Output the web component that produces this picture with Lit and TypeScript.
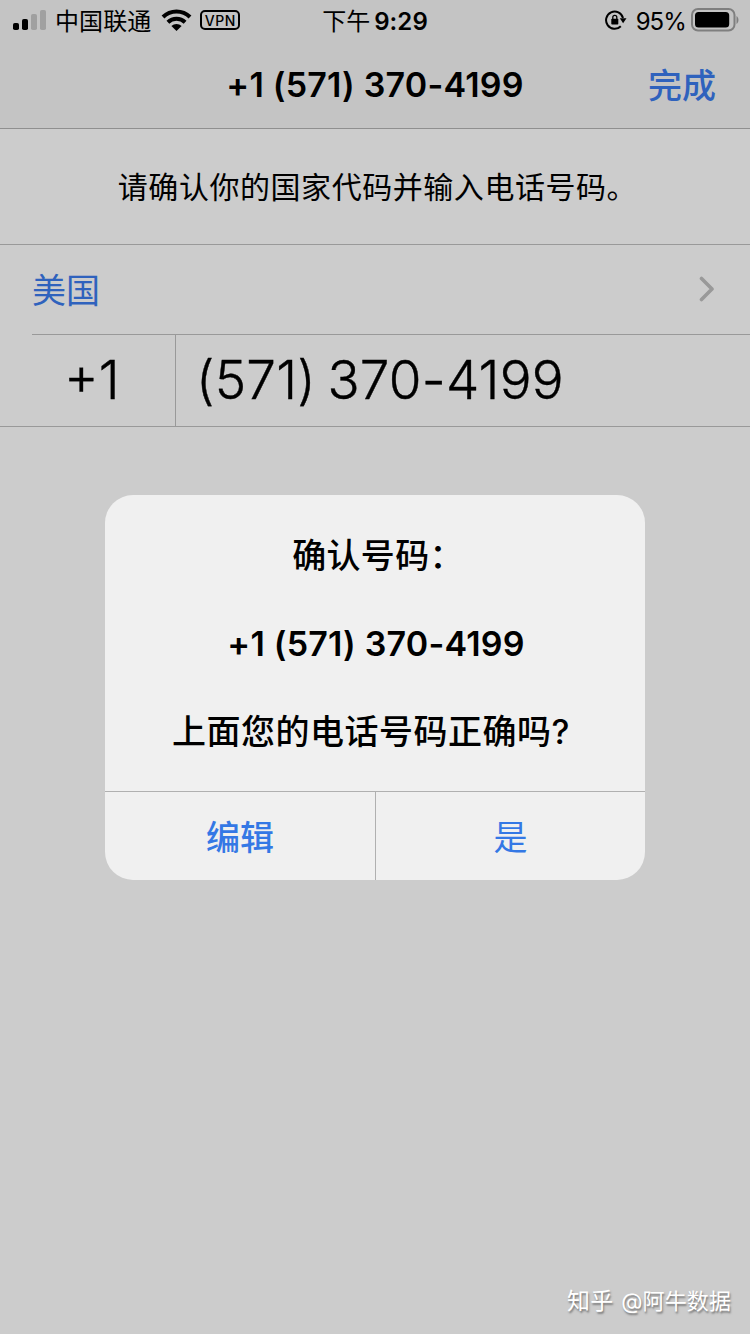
import { LitElement, html, css, svg } from 'lit';
import { customElement, property } from 'lit/decorators.js';

@customElement('status-bar')
export class StatusBar extends LitElement {
  @property() carrier = '';
  @property() time = '';
  @property() period = '';
  @property({ type: Number }) battery = 100;

  static styles = css`
    :host {
      display: grid;
      grid-template-columns: 1fr auto 1fr;
      grid-template-rows: 40px;
      height: 40px;
      font-size: 24px;
      line-height: 38px;
      color: #000;
    }
    svg {
      display: block;
      flex: none;
    }
    .left,
    .middle,
    .right {
      display: flex;
      align-items: center;
      box-sizing: border-box;
      height: 40px;
      white-space: nowrap;
    }
    .left {
      padding-left: 13px;
    }
    .carrier {
      margin-left: 9px;
      padding-top: 3px;
      letter-spacing: 0.1px;
    }
    .wifi {
      margin-left: 10px;
    }
    .vpn {
      box-sizing: border-box;
      width: 40px;
      height: 20px;
      margin-left: 8px;
      border: 2px solid #000;
      border-radius: 5px;
      font-size: 14px;
      font-weight: 500;
      line-height: 17px;
      letter-spacing: 0.6px;
      text-align: center;
    }
    .middle {
      gap: 4px;
      padding-top: 3px;
    }
    .clock {
      font-weight: 600;
      letter-spacing: 0.1px;
    }
    .right {
      justify-content: flex-end;
      padding-right: 11px;
    }
    .percent {
      margin: 3px 5px 0 9px;
      letter-spacing: -0.9px;
    }
  `;

  render() {
    return html`
      <div class="left">
        <svg width="33" height="22" viewBox="0 0 33 22">
          <rect x="0" y="14" width="6" height="7" rx="1.8" />
          <rect x="9" y="10" width="6" height="11" rx="1.8" />
          <rect x="18" y="5" width="6" height="16" rx="1.8" fill="#a0a0a0" />
          <rect x="27" y="1" width="6" height="20" rx="1.8" fill="#a0a0a0" />
        </svg>
        <span class="carrier">${this.carrier}</span>
        <svg class="wifi" width="31" height="22" viewBox="0 0 31 22">
          <path d="M15.5 22 10.4 17a7.2 7.2 0 0 1 10.2 0Z" />
          <path d="M6.9 13.2a12.4 12.4 0 0 1 17.2 0" fill="none" stroke="#000" stroke-width="4" />
          <path d="M2 8a19.2 19.2 0 0 1 27 0" fill="none" stroke="#000" stroke-width="4" />
        </svg>
        <span class="vpn">VPN</span>
      </div>
      <div class="middle">
        <span>${this.period}</span>
        <span class="clock">${this.time}</span>
      </div>
      <div class="right">
        <svg width="22" height="20" viewBox="0 0 22 20">
          <path d="M15.8 16.2A8.6 8.6 0 1 1 18 8" fill="none" stroke="#000" stroke-width="2" />
          <path d="M14.8 8.2h6.7l-3.4 5Z" />
          <rect x="6.3" y="8.8" width="7" height="5.8" rx="0.8" />
          <path d="M7.8 9V7.3a2 2 0 0 1 4 0V9" fill="none" stroke="#000" stroke-width="1.3" />
        </svg>
        <span class="percent">${this.battery}%</span>
        <svg width="48" height="24" viewBox="0 0 48 24">
          <rect x="1" y="1" width="42.5" height="21.5" rx="6" fill="none" stroke="#7f7f7f" stroke-width="2" />
          ${svg`<rect x="4" y="4" width=${(36 * this.battery) / 100} height="15.5" rx="3.5" />`}
          <path d="M45.5 8v8c2.6-1.4 2.6-6.6 0-8Z" fill="#7f7f7f" />
        </svg>
      </div>
    `;
  }
}

@customElement('confirm-alert')
export class ConfirmAlert extends LitElement {
  @property() heading = '';
  @property() phone = '';
  @property() question = '';

  static styles = css`
    :host {
      display: flex;
      flex-direction: column;
      width: 540px;
      height: 385px;
      border-radius: 28px;
      overflow: hidden;
      background: #f0f0f0;
      color: #000;
    }
    .message {
      flex: 1;
      display: flex;
      flex-direction: column;
      align-items: center;
      padding-top: 39px;
      font-size: 34px;
      font-weight: 500;
      line-height: 44px;
      gap: 44px;
      white-space: nowrap;
    }
    .heading {
      padding-left: 6px;
      letter-spacing: 0.3px;
    }
    .phone {
      padding-left: 2px;
      font-weight: 600;
      letter-spacing: 0.2px;
    }
    .question {
      padding-right: 8px;
      letter-spacing: 0.5px;
    }
    .buttons {
      display: grid;
      grid-template-columns: 270px 1fr;
      height: 88px;
      border-top: 1px solid #b0b0b0;
    }
    button {
      border: 0;
      padding: 0 0 2px;
      background: none;
      font: inherit;
      font-size: 34px;
      color: #3478e5;
    }
    .edit {
      font-weight: 500;
    }
    .yes {
      border-left: 1px solid #b0b0b0;
    }
  `;

  render() {
    return html`
      <div class="message">
        <div class="heading">${this.heading}</div>
        <div class="phone">${this.phone}</div>
        <div class="question">${this.question}</div>
      </div>
      <div class="buttons">
        <button class="edit">编辑</button>
        <button class="yes">是</button>
      </div>
    `;
  }
}

@customElement('app-root')
export class AppRoot extends LitElement {
  @property() code = '+1';
  @property() phone = '(571) 370-4199';

  static styles = css`
    :host {
      display: block;
      position: relative;
      width: 750px;
      height: 1334px;
      overflow: hidden;
      background: #ccc;
      color: #000;
      font-family: Inter, 'Noto Sans CJK SC', sans-serif;
    }
    header {
      box-sizing: border-box;
      height: 129px;
      background: #c4c4c4;
      border-bottom: 1px solid #8f8f8f;
    }
    nav {
      display: grid;
      grid-template-columns: 1fr auto 1fr;
      align-items: center;
      height: 88px;
      font-size: 34px;
    }
    .title {
      grid-column: 2;
      font-weight: 600;
      letter-spacing: 0.2px;
    }
    .done {
      justify-self: end;
      padding: 0 34px 2px 0;
      font-weight: 500;
      color: #2f62bd;
    }
    .hint {
      height: 115px;
      padding-left: 5px;
      line-height: 116px;
      border-bottom: 1px solid #999;
      font-size: 30px;
      letter-spacing: 0.55px;
      text-align: center;
    }
    .country {
      display: flex;
      align-items: center;
      justify-content: space-between;
      box-sizing: border-box;
      height: 90px;
      margin-left: 32px;
      padding: 0 35px 2px 0;
      border-bottom: 1px solid #999;
      font-size: 34px;
      color: #2f62bd;
    }
    .country span {
      padding-bottom: 1px;
    }
    .number {
      display: flex;
      height: 91px;
      border-bottom: 1px solid #999;
      font-size: 53px;
      font-weight: 300;
      line-height: 90px;
      white-space: nowrap;
      -webkit-text-stroke: 0.4px #000;
    }
    .code {
      box-sizing: border-box;
      width: 176px;
      border-right: 1px solid #999;
      padding-left: 64px;
    }
    .phone {
      padding-left: 20px;
      letter-spacing: 0.2px;
      word-spacing: -3.5px;
    }
    confirm-alert {
      position: absolute;
      top: 495px;
      left: 105px;
    }
    .watermark {
      position: absolute;
      right: 19px;
      bottom: 17px;
      display: flex;
      gap: 8px;
      font-size: 22px;
      line-height: 32px;
      letter-spacing: 0.1px;
      color: #fff;
      text-shadow: 1px 2px 2px #777;
    }
    .brand {
      font-size: 23px;
    }
  `;

  render() {
    const full = `${this.code} ${this.phone}`;
    return html`
      <header>
        <status-bar carrier="中国联通" period="下午" time="9:29" battery="95"></status-bar>
        <nav>
          <span class="title">${full}</span>
          <span class="done">完成</span>
        </nav>
      </header>
      <div class="hint">请确认你的国家代码并输入电话号码。</div>
      <div class="country">
        <span>美国</span>
        <svg width="16" height="26" viewBox="0 0 16 26">
          <path d="m2.5 2.5 10.5 10.5-10.5 10.5" fill="none" stroke="#999" stroke-width="3.6" stroke-linecap="round" stroke-linejoin="round" />
        </svg>
      </div>
      <div class="number">
        <div class="code">${this.code}</div>
        <div class="phone">${this.phone}</div>
      </div>
      <confirm-alert heading="确认号码：" .phone=${full} question="上面您的电话号码正确吗?"></confirm-alert>
      <div class="watermark"><span class="brand">知乎</span><span>@阿牛数据</span></div>
    `;
  }
}
